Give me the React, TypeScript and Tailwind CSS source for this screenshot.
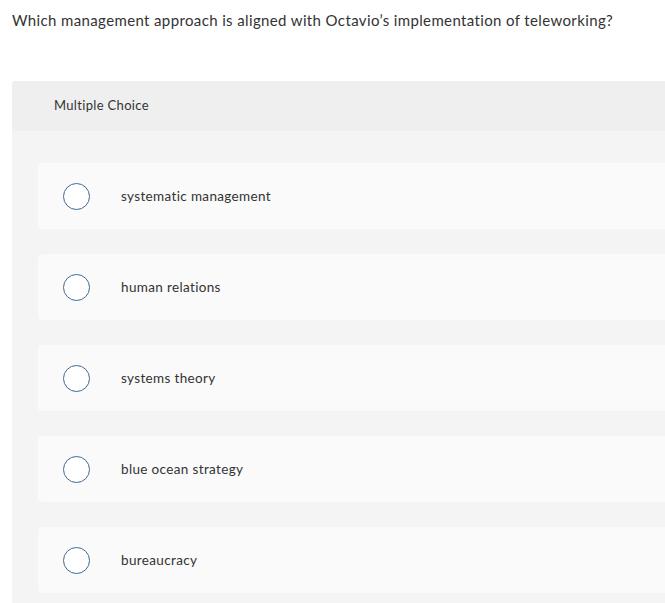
import React from 'react';

const options = [
  'systematic management',
  'human relations',
  'systems theory',
  'blue ocean strategy',
  'bureaucracy',
];

const OptionRow = ({ label }: { label: string }) => (
  <div className="flex items-center h-[66px] bg-[#fafafa] rounded-l-[4px] pl-[25px]">
    <span className="w-[27px] h-[27px] rounded-full border-[1.5px] border-[#3f6895] bg-white shrink-0" />
    <span className="ml-[31px] text-[13.5px] tracking-[0.35px] text-[#333]">{label}</span>
  </div>
);

export default function App() {
  return (
    <div className="w-[665px] h-[603px] overflow-hidden bg-white text-[#333]" style={{ fontFamily: 'Lato, "Open Sans", sans-serif' }}>
      <p className="pl-[12px] pt-[10px] text-[15px] leading-[20px] tracking-[0.37px] text-[#333]">
        Which management approach is aligned with Octavio’s implementation of teleworking?
      </p>

      <div className="ml-[12px] mt-[51px] rounded-tl-[3px] overflow-hidden">
        <div className="h-[50px] bg-[#efefef] flex items-center pl-[42px] text-[13px] tracking-[0.33px] text-[#333]">
          Multiple Choice
        </div>
        <div className="bg-[#f4f4f4] pl-[26px] pt-[32px] pb-[10px] flex flex-col gap-[25px]">
          {options.map((o) => (
            <OptionRow key={o} label={o} />
          ))}
        </div>
      </div>
    </div>
  );
}
